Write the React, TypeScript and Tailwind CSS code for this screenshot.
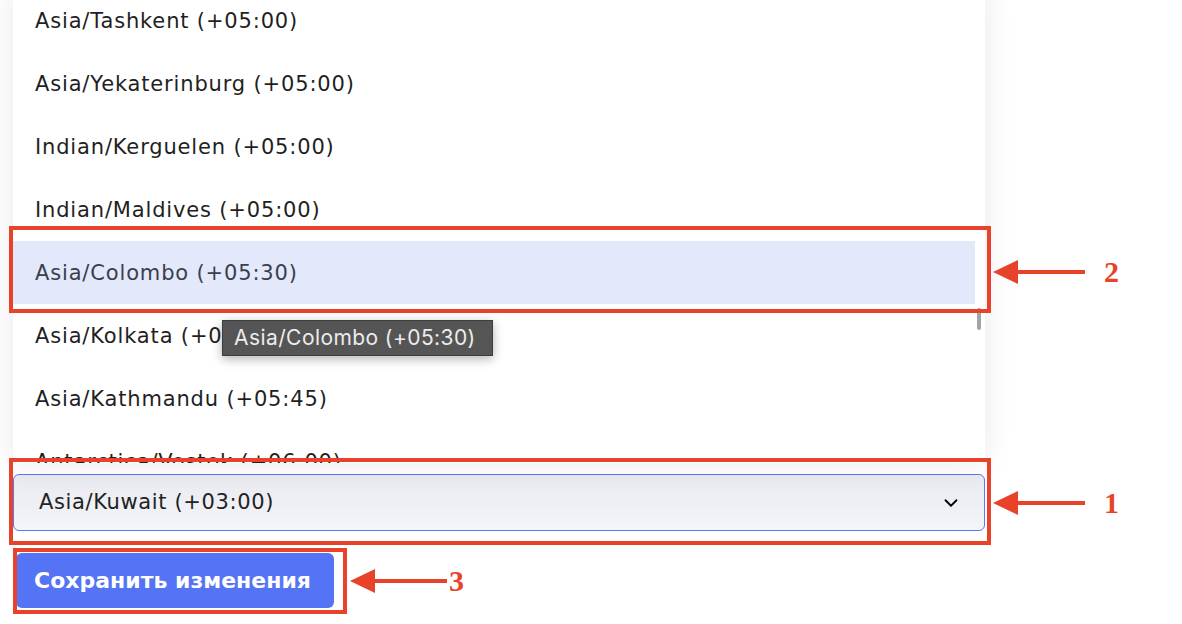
import { ChevronDown } from "lucide-react";

const zones = [
  "Asia/Tashkent (+05:00)",
  "Asia/Yekaterinburg (+05:00)",
  "Indian/Kerguelen (+05:00)",
  "Indian/Maldives (+05:00)",
  "Asia/Colombo (+05:30)",
  "Asia/Kolkata (+05:30)",
  "Asia/Kathmandu (+05:45)",
  "Antarctica/Vostok (+06:00)",
];

function Arrow({ len }: { len: number }) {
  // red annotation arrow pointing left
  return (
    <svg width={len} height={26} viewBox={`0 0 ${len} 26`} className="shrink-0">
      <path d="M0 13 L25 1 L25 25 Z" fill="#e8432a" />
      <rect x={20} y={11} width={len - 20} height={4} fill="#e8432a" />
    </svg>
  );
}

function Note({ n, len, gap }: { n: string; len: number; gap: string }) {
  return (
    <div className={`flex items-center ${gap}`}>
      <Arrow len={len} />
      <span
        className="font-bold text-[#e8432a] text-[30px] leading-none"
        style={{ fontFamily: "'Liberation Serif', serif" }}
      >
        {n}
      </span>
    </div>
  );
}

export default function App() {
  return (
    <div
      className="relative w-[1182px] h-[624px] overflow-hidden bg-white text-[#1f1f1f]"
      style={{ fontFamily: "'DejaVu Sans', 'Open Sans', sans-serif" }}
    >
      {/* form column */}
      <div className="flex flex-col w-[972px] ml-[13px]">
        {/* dropdown list */}
        <div className="relative mt-[-11px] h-[474px] overflow-hidden bg-white shadow-[0_0_28px_rgba(0,0,0,0.09)]">
          <div className="pr-[10px]">
            {zones.map((z, i) => (
              <div
                key={z}
                className={`h-[63px] flex items-center px-[22px] pt-[3px] text-[21px] tracking-[0.04em] ${
                  i === 4 ? "bg-[#e3e8fb] text-[#3a3f4c]" : ""
                }`}
              >
                {z}
              </div>
            ))}
          </div>
          {/* scrollbar thumb */}
          <div className="absolute right-[4px] top-[319px] w-[4px] h-[22px] rounded-full bg-[#a3a3a8]" />

          {/* tooltip */}
          <div
            className="absolute left-[209px] top-[331px] h-[36px] w-[271px] flex items-center pl-[11px] bg-[#555555] border border-[#3d3d3d] text-[#ececec] text-[21px] tracking-[0.02em] shadow-[0_3px_10px_rgba(0,0,0,0.3)]"
            style={{ fontFamily: "'Inter', 'Liberation Sans', sans-serif" }}
          >
            Asia/Colombo (+05:30)
          </div>
        </div>

        {/* select */}
        <div className="mt-[11px] h-[57px] flex items-center justify-between pl-[25px] pr-[20px] rounded-[6px] border border-[#5a78f0] bg-gradient-to-b from-[#e8eaf0] to-[#f4f5f9] text-[21px] tracking-[0.03em] text-[#222]">
          <span className="pt-[1px]">Asia/Kuwait (+03:00)</span>
          <ChevronDown size={22} strokeWidth={2} className="text-black mr-[2px]" />
        </div>

        {/* save button */}
        <div className="mt-[22px] ml-[3px] flex items-center gap-[16px]">
          <button
            className="h-[55px] w-[318px] rounded-[6px] bg-[#5473f5] text-white text-[22px] font-bold text-left pl-[18px]"
            style={{ fontFamily: "'DejaVu Sans', sans-serif" }}
          >
            Сохранить изменения
          </button>
          <Note n="3" len={97} gap="gap-[2px]" />
        </div>
      </div>

      {/* annotation boxes */}
      <div className="absolute left-[9px] top-[226px] w-[982px] h-[87px] border-4 border-[#e8432a]" />
      <div className="absolute left-[9px] top-[458px] w-[982px] h-[87px] border-4 border-[#e8432a]" />
      <div className="absolute left-[13px] top-[548px] w-[334px] h-[66px] border-4 border-[#e8432a]" />

      {/* annotation arrows */}
      <div className="absolute left-[993px] top-[257px]">
        <Note n="2" len={92} gap="gap-[19px]" />
      </div>
      <div className="absolute left-[993px] top-[488px]">
        <Note n="1" len={92} gap="gap-[19px]" />
      </div>
    </div>
  );
}
